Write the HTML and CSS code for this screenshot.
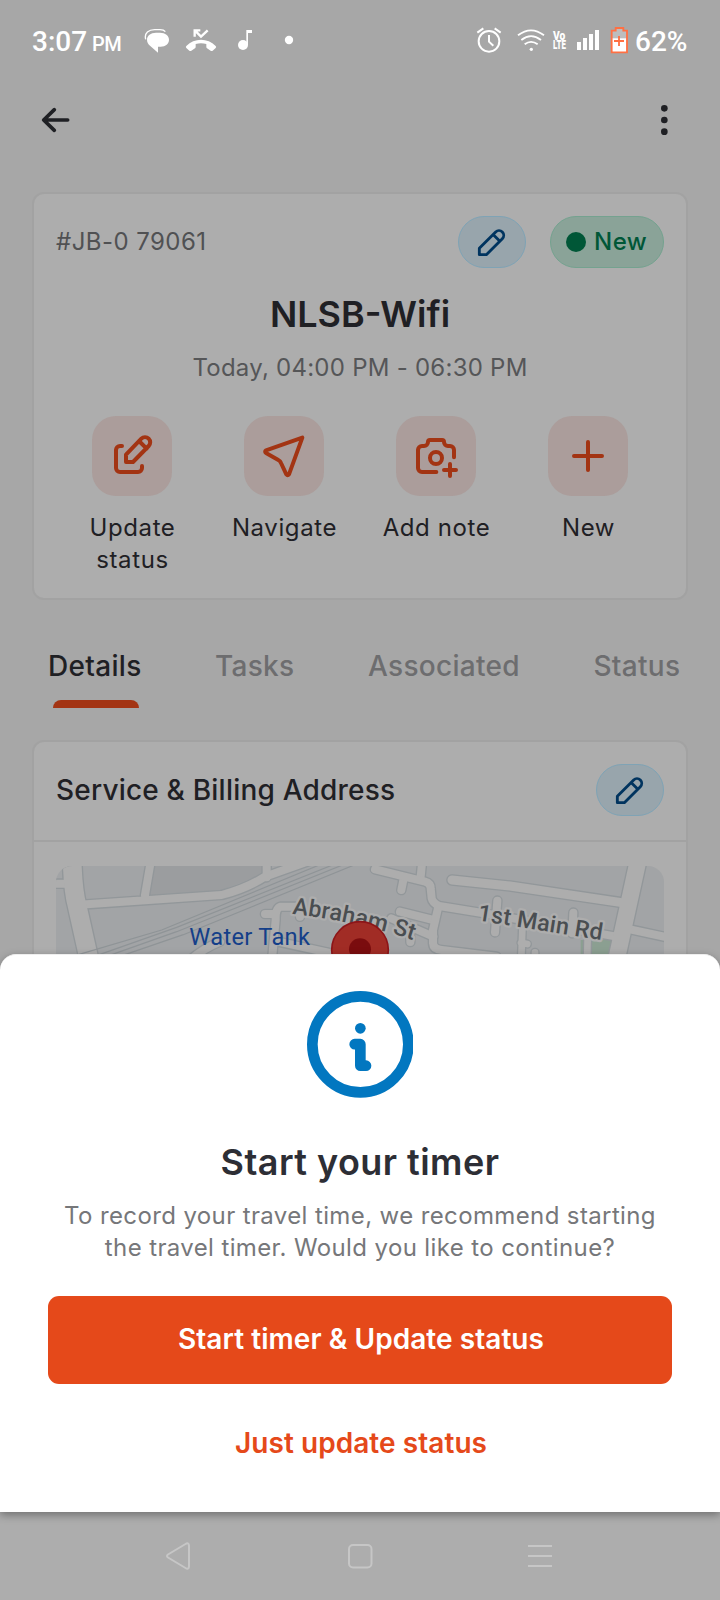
FILE: index.html
```
<!DOCTYPE html>
<html lang="en">
<head>
<meta charset="utf-8">
<title>Job details</title>
<link rel="stylesheet" href="styles.css">
</head>
<body>
<div class="screen">
  <header class="status-bar">
    <span class="clock">3:07</span><span class="meridiem">PM</span>
    <svg class="notifications" viewBox="432 78 456 84" fill="#fff">
      <path d="M437 118C432 98 447 89 464 89H480C488 89 493 91 496 95" fill="none" stroke="#fff" stroke-width="4"/>
      <path d="M468 98H480C496 98 507 107 507 119S497 140 482 140H474V158L450 137C444 132 441 126 441 119C441 107 452 98 468 98Z"/>
      <path d="M559 138C583 113 623 113 647 138Q650 141 647 144L638 152Q635 154 632 152L621 145Q619 143 619 140V132Q603 127 587 132V140Q587 143 585 145L574 152Q571 154 568 152L559 144Q556 141 559 138Z"/>
      <path d="M584 110V91H601M585 92L603 110L623 91" fill="none" stroke="#fff" stroke-width="7"/>
      <circle cx="729" cy="135" r="15"/>
      <path d="M739 90H756V99H744V135H739Z"/>
      <circle cx="867" cy="120" r="12.500"/>
    </svg>
    <svg class="indicators" viewBox="348 78 474 84" fill="none" stroke="#fff">
      <circle cx="387" cy="124" r="31" stroke-width="6"/>
      <path d="M387 105V125L400 137" stroke-width="6"/>
      <path d="M352 98L370 85M422 98L404 85" stroke-width="6"/>
      <path d="M474 106Q513 76 552 106M484 120Q513 97 543 120M494 133Q513 118 533 133" stroke-width="5.500"/>
      <circle cx="514" cy="148" r="5" fill="#fff" stroke="none"/>
      <g class="volte"><text x="579" y="119" textLength="37" lengthAdjust="spacingAndGlyphs">Vo</text><text x="579" y="147" textLength="39" lengthAdjust="spacingAndGlyphs">LTE</text></g>
      <path d="M651 126h12v24h-12zM669 114h12v36h-12zM687 102h12v48h-12zM705 90h12v60h-12z" fill="#fff" stroke="none"/>
      <path d="M755 92H767V84H790V92H801V156H755Z" fill="#bdbdbd" stroke="none"/>
      <path d="M755 115H801V156H755Z" fill="#fff" stroke="none"/>
      <path d="M755 92H767V84H790V92H801V157H755ZM762 123H792M777 108V138" stroke="#ff7043" stroke-width="5.500"/>
    </svg>
    <span class="battery">62%</span>
  </header>

  <nav class="app-bar">
    <svg class="back" viewBox="120 318 96 84"><path d="M203 360H131M163 329L131 360L163 391"/></svg>
    <svg class="more" viewBox="896 309 32 102"><circle cx="912" cy="325" r="10"/><circle cx="912" cy="360" r="10"/><circle cx="912" cy="395" r="10"/></svg>
  </nav>

  <main class="content">
    <section class="card job">
      <div class="job-head">
        <span class="job-id">#JB-0 79061</span>
        <span class="pill edit"><svg viewBox="294 108 204 156"><path d="M358 224V205L407 156A14 14 0 0 1 427 176L379 224ZM400 164L419 183"/></svg></span>
        <span class="pill state"><i class="dot"></i><span class="state-name">New</span></span>
      </div>
      <h1 class="job-title">NLSB-Wifi</h1>
      <p class="job-time">Today, 04:00 PM - 06:30 PM</p>
      <div class="actions">
        <div class="action"><svg class="tile" viewBox="216 48 240 240"><path d="M306 138H300A12 12 0 0 0 288 150V204A12 12 0 0 0 300 216H354A12 12 0 0 0 366 204V198M318 186H339L386 138A15.500 15.500 0 0 0 364 116L318 164ZM357 123L380 146"/></svg><span>Update status</span></div>
        <div class="action"><svg class="tile" viewBox="672 48 240 240"><path d="M847 113L807 223Q803 228 799 223L783 189Q781 183 775 180L738 159Q733 155 738 151Z"/></svg><span>Navigate</span></div>
        <div class="action"><svg class="tile" viewBox="108 48 240 240"><path d="M229 216H186A12 12 0 0 1 174 204V150A12 12 0 0 1 186 138H192A12 12 0 0 0 204 126A6 6 0 0 1 210 120H246A6 6 0 0 1 252 126A12 12 0 0 0 264 138H270A12 12 0 0 1 282 150V172M252 210H288M270 192V228"/><circle cx="228" cy="174" r="18"/></svg><span>Add note</span></div>
        <div class="action"><svg class="tile" viewBox="564 48 240 240"><path d="M642 168H726M684 126V210"/></svg><span>New</span></div>
      </div>
    </section>

    <div class="tabs">
      <span class="tab active">Details</span>
      <span class="tab">Tasks</span>
      <span class="tab">Associated</span>
      <span class="tab">Status</span>
    </div>

    <section class="card address">
      <div class="address-head">
        <h2 class="address-title">Service &amp; Billing Address</h2>
        <span class="pill edit"><svg viewBox="294 108 204 156"><path d="M358 224V205L407 156A14 14 0 0 1 427 176L379 224ZM400 164L419 183"/></svg></span>
      </div>
      <svg class="map" viewBox="78 78 1824 414">
        <defs>
          <g id="roads" fill="none" stroke-linecap="round" stroke-linejoin="round">
            <path class="w26" d="M60 131H110M480 360Q520 325 570 305M705 222H735M800 200H752Q736 204 737 240L724 380M745 305L950 350M810 225V230"/>
            <path class="w24" d="M363 60L345 165M710 60V112M170 193L575 165Q650 145 705 110L860 55"/>
            <path class="w58" d="M126 50Q128 150 142 200L182 380"/>
            <path class="w26" d="M1177 60L1172 110M1120 120L1114 150M1402 182L1395 277M1630 218L1627 280M1110 215L1210 240M1084 235L1210 290M1141 290V306M1800 268L1920 294"/>
            <path class="w26" d="M1035 88L1185 125Q1202 130 1202 145L1205 175Q1208 190 1228 198L1375 222L1760 290M1225 200L1209 270V310Q1210 328 1235 330L1400 350"/>
            <path class="w28" d="M1266 120L1440 138L1790 190"/>
            <path class="w20" d="M1477 270L1473 380M1473 308L1492 312M1515 337V345M1673 290L1671 380"/>
            <path class="w50" d="M1827 50L1757 370"/>
          </g>
        </defs>
        <rect x="78" y="78" width="1824" height="414" fill="#a2a4a6"/>
        <path d="M375 78L358 165L570 152L697 103V78Z" fill="#9b9d9f"/>
        <path d="M1652 300H1748L1730 360H1652Z" fill="#8b9f91"/>
        <use href="#roads" class="casing"/>
        <use href="#roads" class="surface"/>
        <path d="M145 344L395 270L870 74M208 344L440 262L910 74M245 344L440 275L940 74M285 344L460 284L975 74" fill="none" stroke="#8f9497" stroke-width="3.500"/>
        <path id="abraham" d="M786 221Q980 245 1148 300" fill="none"/>
        <text class="street"><textPath href="#abraham" textLength="372">Abraham St</textPath></text>
        <text class="street" transform="translate(1341 241) rotate(9)" textLength="378">1st Main Rd</text>
        <text class="place" x="478" y="316" textLength="362">Water Tank</text>
        <circle cx="990" cy="330" r="85" fill="#a12c25" stroke="#8d1518" stroke-width="5"/>
        <circle cx="990" cy="328" r="33" fill="#7a0c0e"/>
      </svg>
    </section>
  </main>

  <footer class="nav-bar">
    <svg viewBox="0 0 28 28"><path d="M20.500 2Q23.500 0 24 3.500V24.500Q23.500 28 20.500 26L3 15.500Q1 14 3 12.500Z"/></svg>
    <svg viewBox="0 0 28 28"><rect x="3" y="3" width="22.500" height="22.500" rx="4"/></svg>
    <svg viewBox="0 0 28 28"><path d="M2 4H26M2 14H26M2 24H26"/></svg>
  </footer>

  <div class="sheet">
    <svg class="info" viewBox="320 62 320 320"><circle cx="480" cy="222" r="144" fill="none" stroke="#0277c0" stroke-width="32"/><circle cx="480" cy="174" r="16" fill="#0277c0"/><path d="M463 221.500H480V286H497" fill="none" stroke="#0277c0" stroke-width="32" stroke-linecap="round" stroke-linejoin="round"/></svg>
    <h2 class="sheet-title">Start your timer</h2>
    <p class="sheet-text">To record your travel time, we recommend starting<br>the travel timer. Would you like to continue?</p>
    <button class="primary">Start timer &amp; Update status</button>
    <button class="secondary">Just update status</button>
  </div>
</div>
</body>
</html>
```
FILE: styles.css
```
* { box-sizing: border-box; }
body { margin: 0; font-family: Inter, "Liberation Sans", sans-serif; }
h1, h2, p { margin: 0; }
svg { display: block; flex: none; }

.screen {
  position: relative;
  display: flex;
  flex-direction: column;
  width: 720px;
  height: 1600px;
  overflow: hidden;
  background: #a7a7a7;
  color: #1f2024;
}

.status-bar {
  display: flex;
  align-items: center;
  height: 80px;
  padding: 3px 32px 0;
  color: #fff;
  font-family: Roboto, sans-serif;
  font-weight: 500;
  font-size: 28px;
}
.clock { width: 60px; }
.meridiem { width: 52px; padding-top: 5px; font-size: 20px; letter-spacing: -.4px; }
.notifications { width: 152px; height: 28px; margin-top: -3px; }
.indicators { width: 158px; height: 28px; margin: -3px 1px 0 auto; }
.battery { width: 53px; white-space: nowrap; }
.volte { fill: #fff; stroke: none; font-family: Roboto, sans-serif; font-weight: 900; font-size: 36px; }

.app-bar {
  display: flex;
  align-items: center;
  justify-content: space-between;
  height: 80px;
  padding: 0 50.500px 0 40px;
}
.back { width: 32px; height: 28px; fill: none; stroke: #1f2024; stroke-width: 11; stroke-linecap: round; stroke-linejoin: round; }
.more { width: 10.700px; height: 34px; fill: #1f2024; }

.content { height: 1352px; padding: 32px 32px 0; overflow: hidden; }
.card { border: 2px solid #a2a2a2; border-radius: 12px; background: #adadad; }
.job { height: 408px; padding: 22px 22px 0; }
.job-head { display: flex; align-items: center; height: 52px; }
.job-id { margin-right: auto; padding-bottom: 2px; color: #505153; font-size: 24px; letter-spacing: .45px; }
.pill { height: 52px; border: 1px solid #7fa3b5; border-radius: 26px; }
.edit { width: 68px; background: #98a5ac; }
.edit svg { width: 68px; height: 52px; margin: -1px; fill: none; stroke: #00345f; stroke-width: 8.500; stroke-linejoin: round; }
.state {
  display: flex;
  align-items: center;
  gap: 8px;
  width: 114px;
  margin-left: 24px;
  padding-left: 15px;
  border-color: #74a28f;
  background: #8aa398;
  color: #005737;
  font-size: 24px;
  font-weight: 500;
  letter-spacing: .5px;
}
.state-name { padding-bottom: 2px; }
.dot { width: 20px; height: 20px; border-radius: 50%; background: #005737; }
.job-title { margin-top: 24px; text-align: center; font-size: 36px; line-height: 44px; font-weight: 600; }
.job-time { margin-top: 16px; text-align: center; color: #555658; font-size: 24px; line-height: 32px; letter-spacing: .25px; }
.actions { display: flex; gap: 32px; margin-top: 32px; padding-left: 16px; }
.action { display: flex; flex-direction: column; align-items: center; gap: 16px; width: 120px; text-align: center; font-size: 24px; line-height: 32px; letter-spacing: .6px; }
.action span { padding-left: 1px; }
.tile { width: 80px; height: 80px; border-radius: 24px; background: #ab9d9b; fill: none; stroke: #a33413; stroke-width: 12; stroke-linecap: round; stroke-linejoin: round; }

.tabs { display: flex; gap: 73.500px; height: 108px; padding: 44px 0 0 16px; color: #6d6d6f; font-size: 28px; line-height: 44px; font-weight: 500; letter-spacing: .3px; white-space: nowrap; }
.active { color: #1f2024; }
.active::after { content: ""; display: block; width: 86px; height: 8px; margin: 12px 0 0 5px; border-radius: 8px 8px 0 0; background: #a33413; }

.address { height: 800px; margin-top: 32px; }
.address-head { display: flex; align-items: center; justify-content: space-between; height: 100px; padding: 0 22px 2px; border-bottom: 2px solid #a2a2a2; }
.address-title { font-size: 28px; line-height: 36px; font-weight: 500; letter-spacing: .2px; }
.map { width: 608px; height: 138px; margin: 24px 22px 0; border-radius: 16px; }
.casing { --edge: 8px; stroke: #92979a; }
.surface { --edge: 0px; stroke: #adadad; }
.w20 { stroke-width: calc(20px + var(--edge)); }
.w24 { stroke-width: calc(24px + var(--edge)); }
.w26 { stroke-width: calc(24px + var(--edge)); }
.w28 { stroke-width: calc(27px + var(--edge)); }
.w50 { stroke-width: calc(50px + var(--edge)); }
.w58 { stroke-width: calc(56px + var(--edge)); }
.street { fill: #4a4e51; stroke: #adadad; stroke-width: 14; stroke-linejoin: round; paint-order: stroke; font: 500 70px Roboto, sans-serif; }
.place { fill: #143f89; font: 400 71px Roboto, sans-serif; }

.nav-bar { display: flex; justify-content: space-between; height: 88px; padding: 30px 166px 0 165px; background: #adadad; }
.nav-bar svg { width: 28px; height: 28px; fill: none; stroke: #c6c6c6; stroke-width: 2; }

.sheet {
  position: absolute;
  top: 954px;
  left: 0;
  display: flex;
  flex-direction: column;
  align-items: center;
  width: 720px;
  height: 558px;
  padding: 37px 48px 0;
  border-top: 1px solid #eee;
  border-radius: 16px 16px 0 0;
  background: #fff;
  box-shadow: 0 3px 8px rgba(0, 0, 0, .35);
  text-align: center;
}
.info { width: 106.700px; height: 106.700px; margin-top: -1px; }
.sheet-title { margin-top: 40px; color: #2d2e35; font-size: 36px; line-height: 48px; font-weight: 600; letter-spacing: .45px; }
.sheet-text { margin-top: 14px; color: #76777a; font-size: 24px; line-height: 32px; letter-spacing: .38px; white-space: nowrap; }
.primary, .secondary { padding: 0 0 0 2px; border: 0; font: 600 28px/88px Inter, sans-serif; letter-spacing: .06px; }
.primary { width: 624px; height: 88px; margin-top: 32px; padding-bottom: 1px; border-radius: 11px; background: #e5491a; color: #fff; line-height: 87px; }
.secondary { height: 88px; margin-top: 16px; padding-bottom: 1px; background: none; color: #e5491a; line-height: 87px; }
```
